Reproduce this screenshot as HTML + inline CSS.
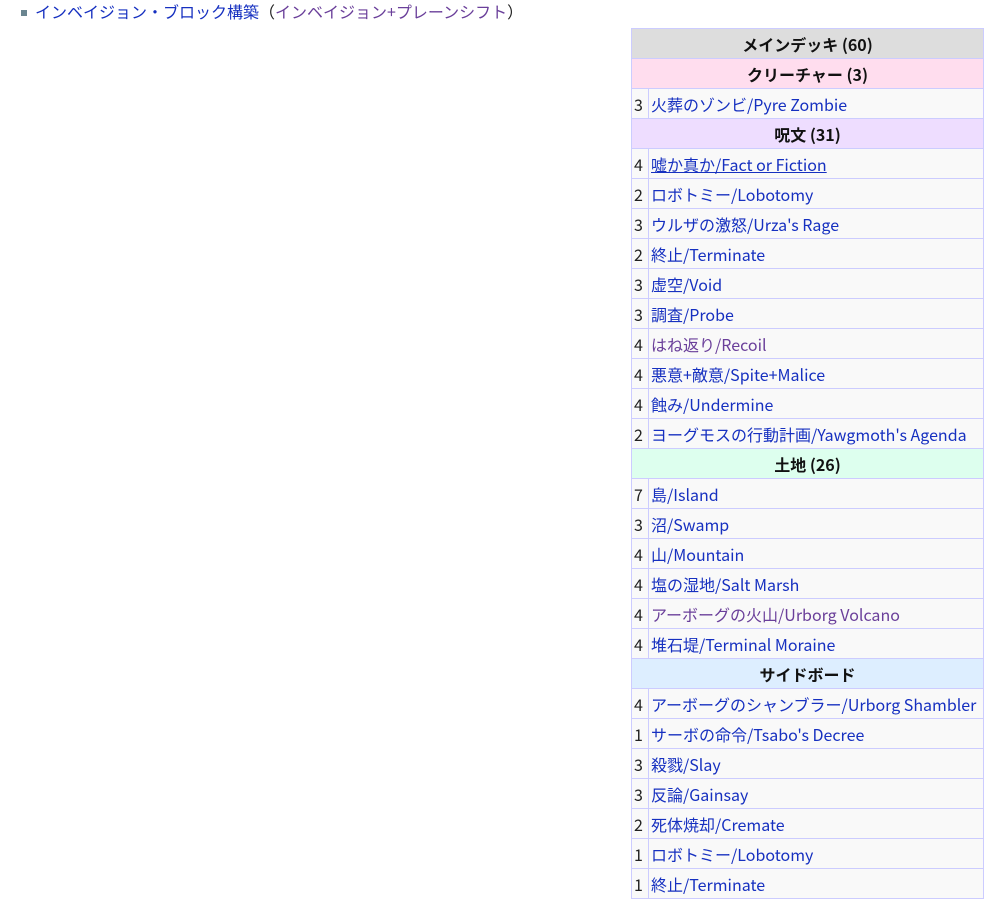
<!DOCTYPE html>
<html><head><meta charset="utf-8"><style>
body{margin:0;background:#fff;font-family:"Noto Sans CJK JP","Liberation Sans",sans-serif;font-size:16px;}
.top{position:absolute;left:21px;top:0px;line-height:22px;color:#222;}
.top .b{display:inline-block;width:6px;height:6px;background:#6a8590;margin-right:8px;vertical-align:middle;position:relative;top:-1px}
a{color:#1630c0;text-decoration:none}
.v{color:#6a3f9a}
table{position:absolute;left:631px;top:28px;width:353px;border-collapse:collapse;}
td{border:1px solid #ccccff;height:29px;padding:0 2px;line-height:28px;background:#f9f9f9;white-space:nowrap;color:#222}
td.n{width:13px;padding:0 1px 0 2px}
th{border:1px solid #ccccff;height:29px;padding:0;line-height:28px;font-weight:bold;color:#111}
.h0{background:#dddddd}.h1{background:#ffddee}.h2{background:#eeddff}.h3{background:#ddffee}.h4{background:#ddeeff}
</style></head><body>
<div class="top"><span class="b"></span><a href="#">インベイジョン・ブロック構築</a>（<a class="v" href="#">インベイジョン+プレーンシフト</a>）</div>
<table>
<tr><th colspan="2" class="h0">メインデッキ (60)</th></tr>
<tr><th colspan="2" class="h1">クリーチャー (3)</th></tr>
<tr><td class="n">3</td><td><a href="#">火葬のゾンビ/Pyre Zombie</a></td></tr>
<tr><th colspan="2" class="h2">呪文 (31)</th></tr>
<tr><td class="n">4</td><td><a href="#" style="text-decoration:underline">嘘か真か/Fact or Fiction</a></td></tr>
<tr><td class="n">2</td><td><a href="#">ロボトミー/Lobotomy</a></td></tr>
<tr><td class="n">3</td><td><a href="#">ウルザの激怒/Urza's Rage</a></td></tr>
<tr><td class="n">2</td><td><a href="#">終止/Terminate</a></td></tr>
<tr><td class="n">3</td><td><a href="#">虚空/Void</a></td></tr>
<tr><td class="n">3</td><td><a href="#">調査/Probe</a></td></tr>
<tr><td class="n">4</td><td><a class="v" href="#">はね返り/Recoil</a></td></tr>
<tr><td class="n">4</td><td><a href="#">悪意+敵意/Spite+Malice</a></td></tr>
<tr><td class="n">4</td><td><a href="#">蝕み/Undermine</a></td></tr>
<tr><td class="n">2</td><td><a href="#">ヨーグモスの行動計画/Yawgmoth's Agenda</a></td></tr>
<tr><th colspan="2" class="h3">土地 (26)</th></tr>
<tr><td class="n">7</td><td><a href="#">島/Island</a></td></tr>
<tr><td class="n">3</td><td><a href="#">沼/Swamp</a></td></tr>
<tr><td class="n">4</td><td><a href="#">山/Mountain</a></td></tr>
<tr><td class="n">4</td><td><a href="#">塩の湿地/Salt Marsh</a></td></tr>
<tr><td class="n">4</td><td><a class="v" href="#">アーボーグの火山/Urborg Volcano</a></td></tr>
<tr><td class="n">4</td><td><a href="#">堆石堤/Terminal Moraine</a></td></tr>
<tr><th colspan="2" class="h4">サイドボード</th></tr>
<tr><td class="n">4</td><td><a href="#">アーボーグのシャンブラー/Urborg Shambler</a></td></tr>
<tr><td class="n">1</td><td><a href="#">サーボの命令/Tsabo's Decree</a></td></tr>
<tr><td class="n">3</td><td><a href="#">殺戮/Slay</a></td></tr>
<tr><td class="n">3</td><td><a href="#">反論/Gainsay</a></td></tr>
<tr><td class="n">2</td><td><a href="#">死体焼却/Cremate</a></td></tr>
<tr><td class="n">1</td><td><a href="#">ロボトミー/Lobotomy</a></td></tr>
<tr><td class="n">1</td><td><a href="#">終止/Terminate</a></td></tr>
</table>
</body></html>
